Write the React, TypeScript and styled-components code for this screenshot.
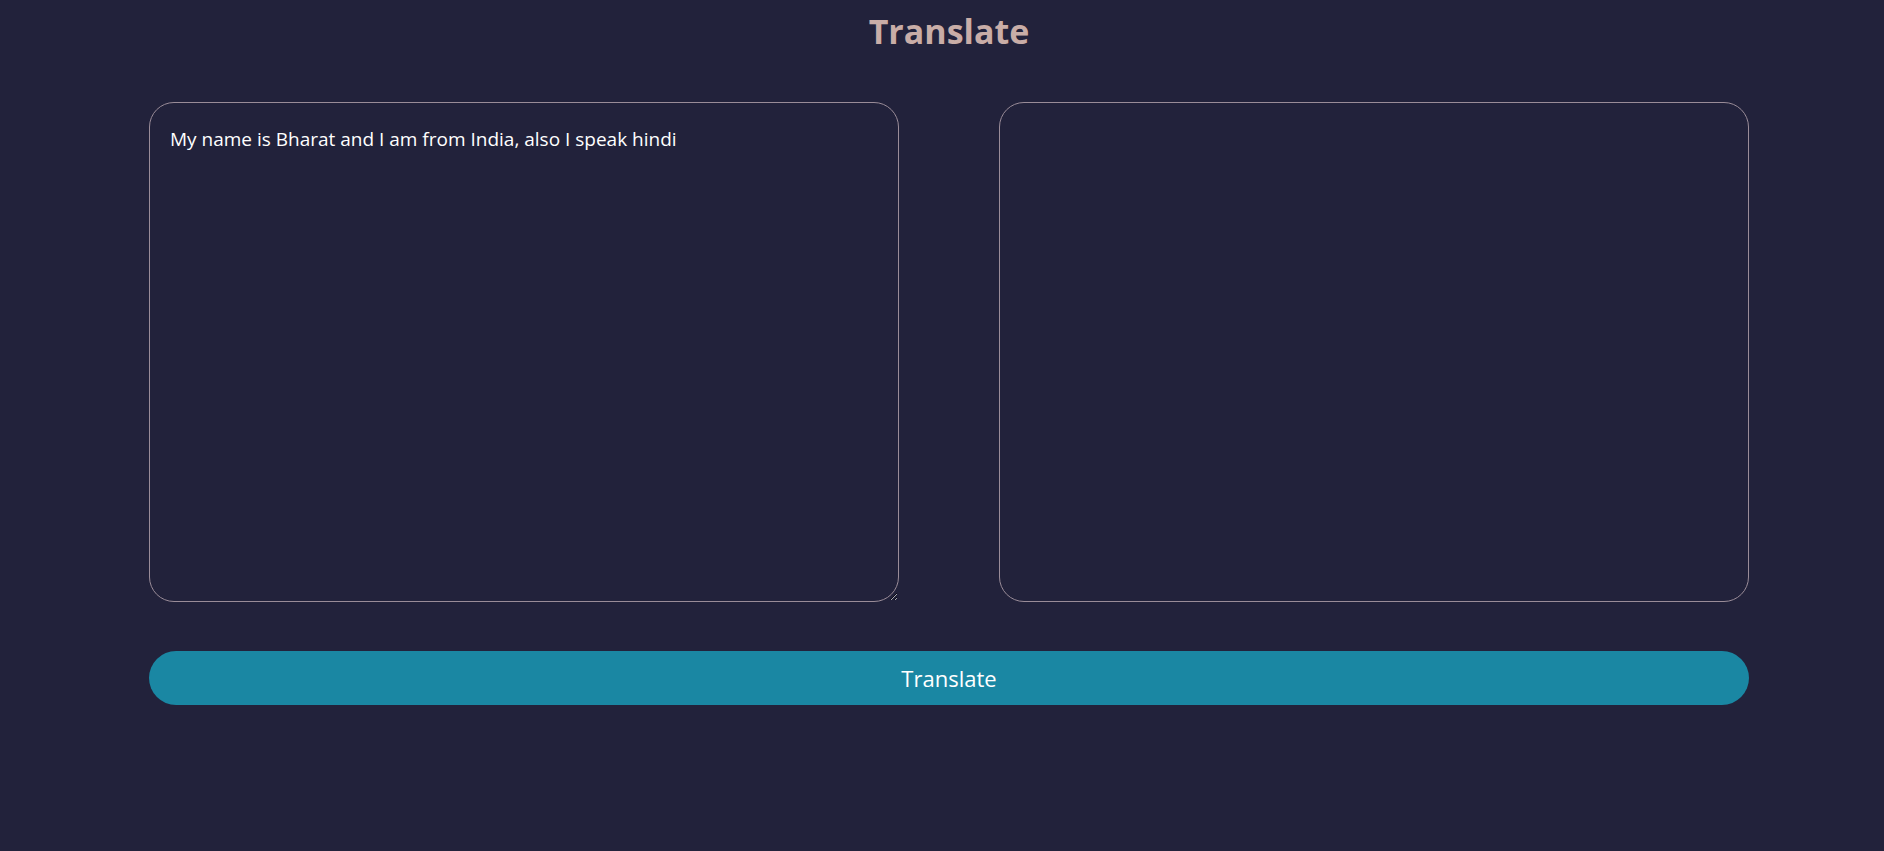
import React, { useState } from 'react';
import styled, { createGlobalStyle } from 'styled-components';

const GlobalStyle = createGlobalStyle`
  html, body {
    margin: 0;
    padding: 0;
    background: #22223b;
    font-family: 'Open Sans', 'Noto Sans', sans-serif;
  }
`;

const Page = styled.main`
  width: 1600px;
  margin-left: 149px;
  min-height: 851px;
  display: flex;
  flex-direction: column;
`;

const Title = styled.h1`
  margin: 0;
  padding-top: 7px;
  height: 102px;
  box-sizing: border-box;
  text-align: center;
  font-size: 34px;
  line-height: 48px;
  font-weight: 700;
  color: #c9ada7;
`;

const Boxes = styled.div`
  display: grid;
  grid-template-columns: 750px 750px;
  column-gap: 100px;
`;

const TextBox = styled.textarea<{ $readOnly?: boolean }>`
  box-sizing: border-box;
  width: 750px;
  height: 500px;
  padding: 23px 20px 20px;
  border: 1px solid #9a8c98;
  border-radius: 25px;
  background: transparent;
  color: #ffffff;
  font-family: 'Open Sans', 'Noto Sans', sans-serif;
  font-size: 19px;
  line-height: 26px;
  outline: none;
  resize: ${(p) => (p.$readOnly ? 'none' : 'both')};
`;

const Button = styled.button`
  margin-top: 49px;
  width: 1600px;
  height: 54px;
  border: none;
  border-radius: 27px;
  background: #1a87a3;
  color: #ffffff;
  font-family: 'Open Sans', 'Noto Sans', sans-serif;
  font-size: 22px;
  cursor: pointer;
`;

export default function App() {
  const [text, setText] = useState('My name is Bharat and I am from India, also I speak hindi');
  return (
    <>
      <GlobalStyle />
      <Page>
        <Title>Translate</Title>
        <Boxes>
          <TextBox value={text} onChange={(e) => setText(e.target.value)} />
          <TextBox $readOnly readOnly value="" />
        </Boxes>
        <Button>Translate</Button>
      </Page>
    </>
  );
}
